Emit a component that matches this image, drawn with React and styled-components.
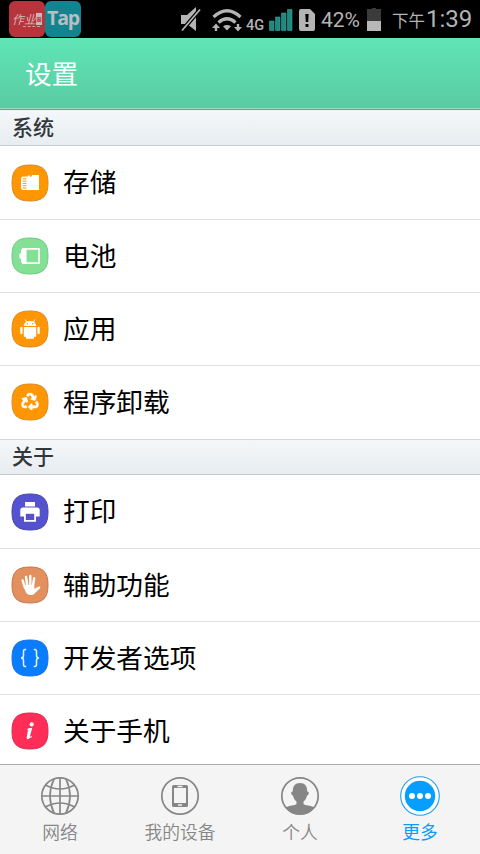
import React from "react";
import styled, { createGlobalStyle } from "styled-components";
import { FaRecycle } from "react-icons/fa";

const GlobalStyle = createGlobalStyle`
  * {
    box-sizing: border-box;
  }
  body {
    margin: 0;
    background: #fff;
    font-family: Roboto, "Noto Sans CJK SC", sans-serif;
  }
`;

const Screen = styled.div`
  width: 480px;
  height: 854px;
  display: flex;
  flex-direction: column;
  overflow: hidden;
`;

const StatusBar = styled.div`
  height: 38px;
  flex: none;
  display: flex;
  align-items: flex-start;
  background: #000;
  color: #b4b4b4;
  padding-left: 9px;
`;

const Spacer = styled.div`
  flex: none;
  width: ${(props) => props.$w}px;
`;

const StatusIcon = styled.div`
  flex: none;
  margin-top: ${(props) => props.$top}px;
`;

const AppBadge = styled.div`
  width: 36px;
  height: 36px;
  flex: none;
  margin-top: 1px;
  border-radius: 6px;
  display: flex;
  flex-direction: column;
  align-items: center;
  justify-content: center;
  background: ${(props) => props.$color};
`;

const TapText = styled.span`
  font: bold 19.5px "Open Sans", sans-serif;
  line-height: 24px;
  letter-spacing: -1.2px;
  padding-bottom: 2px;
  color: #b9bfc0;
`;

const HomeworkText = styled.span`
  display: flex;
  align-items: center;
  font: italic 12px "Noto Sans CJK SC", sans-serif;
  line-height: 14px;
  color: #cfb5b5;
`;

const Stamp = styled.span`
  display: flex;
  align-items: center;
  justify-content: center;
  font: bold 5px "Noto Sans CJK SC", sans-serif;
  height: 12px;
  width: 6px;
  background: #cfb5b5;
  color: #b8343c;
`;

const Tagline = styled.span`
  width: 17px;
  margin-left: 9px;
  border-bottom: 1px dashed #cf9a9c;
`;

const StatusText = styled.span`
  width: ${(props) => props.$w}px;
  flex: none;
  margin-top: ${(props) => props.$top}px;
  font-size: ${(props) => props.$size}px;
  font-weight: ${(props) => props.$weight || 400};
  line-height: 26px;
  white-space: nowrap;
`;

const Header = styled.header`
  height: 72px;
  flex: none;
  display: flex;
  align-items: center;
  padding: 0 25px 4px;
  background: linear-gradient(#5fe5b6, #5acba2 70px, #8fe0c2 70px, #8fe0c2 71px, #5cae90 71px);
  color: #fff;
  font-size: 26.6px;
`;

const SectionTitle = styled.h2`
  height: 36px;
  flex: none;
  margin: 0;
  padding-left: 12px;
  font-size: 21px;
  font-weight: 500;
  line-height: 34px;
  color: #33373b;
  background: linear-gradient(#f4f7f9, #e8edf1);
  border-top: 1px solid ${(props) => props.$edge};
  border-bottom: 1px solid #c9cccf;
`;

const List = styled.div`
  flex: none;
`;

const Row = styled.div`
  height: 73px;
  display: flex;
  align-items: center;
  gap: 14px;
  padding-left: 11px;
  background: #fff;
  color: #000;
  font-size: 26.7px;
  border-bottom: 1px solid #e0e0e0;

  &:first-child {
    height: 74px;
  }
  &:last-child {
    border-bottom-color: #fff;
  }
`;

const RowText = styled.span`
  line-height: 40px;
  padding-top: 1px;
`;

const Content = styled.main`
  height: 654px;
  flex: none;
  overflow: hidden;
`;

const TabBar = styled.nav`
  height: 90px;
  flex: none;
  display: grid;
  grid-template-columns: repeat(4, 1fr);
  background: #f4f4f4;
  border-top: 1px solid #acacac;
`;

const Tab = styled.div`
  display: flex;
  flex-direction: column;
  align-items: center;
  padding-top: 11px;
  color: ${(props) => (props.$active ? "#0d9bf8" : "#868686")};
  font-size: 17.8px;
  font-weight: ${(props) => (props.$active ? 400 : 350)};
`;

const TabText = styled.span`
  margin-top: 4px;
  line-height: 26px;
`;

const IconSvg = styled.svg`
  display: block;
  flex: none;
`;

const Badge = ({ color, edge, children }) => (
  <IconSvg width="38" height="38" viewBox="-19 -19 38 38" fill="#fff">
    <path
      d="M0-18C13-18 18-13 18 0S13 18 0 18-18 13-18 0-13-18 0-18Z"
      fill={color}
      stroke={edge}
    />
    {children}
  </IconSvg>
);

const StorageIcon = () => (
  <Badge color="#ff9602" edge="#d58b2c">
    <path d="M-9-5L-7.5-6.5H-2.2V-7.4H0V-6.2H1.4L2-8H9V7H-7.5L-9 5.5Z" />
    <path d="M-7.2-4.2h3.6M-7.2-1.9h3.6M-7.2 .4h3.6M-7.2 2.7h3.6M-7.2 5h3.6" stroke="#ff9602" strokeWidth="1" />
  </Badge>
);

const BatteryIcon = () => (
  <Badge color="#83e095" edge="#6acb80">
    <path
      fillRule="evenodd"
      d="M-7.5-8H9.8V8H-7.5L-9 6V3L-10.6 2V-2L-9-3V-6ZM-3.5-6.2V6.2H8.2V-6.2Z"
    />
  </Badge>
);

const AndroidIcon = () => (
  <Badge color="#ff9602" edge="#d58b2c">
    <path d="M-6.2-3C-6-6.5-3.5-8-0-8S6-6.5 6.2-3Z" />
    <path d="M-5-9.5L-3.3-7M5-9.5L3.3-7" stroke="#fff" strokeWidth="1" />
    <circle cx="-2.7" cy="-5.2" r=".7" fill="#ff9602" />
    <circle cx="2.7" cy="-5.2" r=".7" fill="#ff9602" />
    <path d="M-6.2-2H6.2V6.5Q6.2 8 4.7 8H4V9.7H-4V8H-4.7Q-6.2 8-6.2 6.5Z" />
    <path d="M-8.6-1V4M8.6-1V4" stroke="#fff" strokeWidth="2.3" strokeLinecap="round" />
  </Badge>
);

const RecycleIcon = () => (
  <Badge color="#ff9602" edge="#d58b2c">
    <FaRecycle x="-8.7" y="-9.3" size="17.4" color="#fff" stroke="#fff" strokeWidth="22" />
  </Badge>
);

const PrintIcon = () => (
  <Badge color="#5552cf" edge="#4943a8">
    <path d="M-5-10H5V-5.5H-5Z" />
    <path d="M-7-4.5H7Q9.7-4.5 9.7-2V4.5H6V9.7H-6V4.5H-9.7V-2Q-9.7-4.5-7-4.5Z" />
    <path d="M-4.2 1.8H4.2V8H-4.2Z" fill="#5552cf" />
  </Badge>
);

const HandIcon = () => (
  <Badge color="#e3905e" edge="#c3754a">
    <path
      d="M-5 3L-7.4-4.6M-2.5 2L-4-8M.3 2L.3-9M2.7 2L4.2-6.8"
      stroke="#fff"
      strokeWidth="2.4"
      strokeLinecap="round"
    />
    <path d="M-6.3 1L-3 0H4.2L4.5 4C6 3 7.5 2.2 9 1.6 10.6 1.4 10.8 2.6 9.8 3.4L5.4 7.8C3.9 9.7 2 10.4 0 10-2.7 9.6-4.2 8-4.8 5.5Z" />
  </Badge>
);

const BracesIcon = () => (
  <Badge color="#0a7cff" edge="#176ee0">
    <path
      d="M-3.8-8.5H-4.8Q-6.5-8.5-6.5-6.5V-2.5Q-6.5 0-9 0-6.5 0-6.5 2.5V6.5Q-6.5 8.5-4.8 8.5H-3.8M3.8-8.5H4.8Q6.5-8.5 6.5-6.5V-2.5Q6.5 0 9 0 6.5 0 6.5 2.5V6.5Q6.5 8.5 4.8 8.5H3.8"
      fill="none"
      stroke="#e5f2ff"
      strokeWidth="1.5"
    />
  </Badge>
);

const InfoIcon = () => (
  <Badge color="#ff2d58" edge="#d8294d">
    <circle cx="1.7" cy="-6.6" r="2.1" />
    <path
      d="M-2.6-1.2Q-.6-2.6 .8-2.2L-1.4 5.6Q-1.5 7.4 1.8 5.4"
      fill="none"
      stroke="#fff"
      strokeWidth="1.2"
    />
    <path d="M-1.6-2.3L2.3-3.2-.3 6.2Q-.6 8.2-2 8.2-3.9 8-3.2 5.4Z" />
  </Badge>
);

const MuteIcon = () => (
  <IconSvg width="21" height="26" viewBox="0 0 21 26" fill="#b4b4b4">
    <path d="M0 8H6L15 0V24L6 17H0Z" />
    <path d="M1 23.5L19 2.5" stroke="#000" strokeWidth="4.2" />
    <path d="M1 23.5L19 2.5" stroke="#b4b4b4" strokeWidth="1.8" />
  </IconSvg>
);

const WifiIcon = () => (
  <IconSvg width="30" height="24" viewBox="0 0 30 24" fill="none" stroke="#b4b4b4">
    <path d="M1.5 8Q15-4.5 28.5 8" strokeWidth="3.2" />
    <path d="M6.5 13.5Q15 6 23.5 13.5" strokeWidth="3.2" />
    <path d="M11 17.3Q15 14.8 19 17.3L15 21.5Z" fill="#b4b4b4" stroke="none" />
    <path d="M4 14.5L8 19H5.2V22H2.8V19H0ZM26 22.5L30 18H27.2V15H24.8V18H22Z" fill="#b4b4b4" stroke="none" />
  </IconSvg>
);

const SignalIcon = () => (
  <IconSvg width="24" height="22" viewBox="0 0 24 22" fill="#1d8a82" stroke="#3f9f97" strokeWidth=".6">
    <path d="M.5 12H5V21.5H.5ZM6.5 8H11V21.5H6.5ZM12.5 4H17V21.5H12.5ZM18.5.5H23V21.5H18.5Z" />
  </IconSvg>
);

const SimIcon = () => (
  <IconSvg width="16" height="22" viewBox="0 0 16 22" fill="#b4b4b4">
    <path d="M2 0H11L16 5V20Q16 22 14 22H2Q0 22 0 20V2Q0 0 2 0Z" />
    <path d="M6.3 5H9.7L9.2 13H6.8ZM6.5 15H9.5V18H6.5Z" fill="#000" />
  </IconSvg>
);

const BatteryStatusIcon = () => (
  <IconSvg width="14" height="23" viewBox="0 0 14 23">
    <path d="M0 1H5V0H9V1H14V13H0Z" fill="#3b3b3b" />
    <path d="M0 13H14V23H0Z" fill="#b8b8b8" />
  </IconSvg>
);

const GlobeIcon = () => (
  <IconSvg width="40" height="40" viewBox="-20 -20 40 40" fill="none" stroke="#868686" strokeWidth="1.7">
    <circle r="18.2" />
    <path d="M0-18V18M-18 0H18" />
    <path d="M-6-17Q-14 0-6 17M6-17Q14 0 6 17" />
    <path d="M-14.5-11Q0-3 14.5-11M-14.5 11Q0 3 14.5 11" />
  </IconSvg>
);

const DeviceIcon = () => (
  <IconSvg width="40" height="40" viewBox="-20 -20 40 40" fill="none" stroke="#868686">
    <circle r="18.2" strokeWidth="1.7" />
    <rect x="-8" y="-11" width="16" height="22" rx="1.5" fill="#868686" stroke="none" />
    <path d="M-6-8H6V7H-6Z" fill="#f4f4f4" stroke="none" />
    <path d="M-2.5-9.5H2.5M-2 9H2" stroke="#f4f4f4" strokeWidth="1.3" />
  </IconSvg>
);

const PersonIcon = () => (
  <IconSvg width="40" height="40" viewBox="-20 -20 40 40" fill="#868686">
    <circle r="18.2" fill="none" stroke="#868686" strokeWidth="1.7" />
    <path d="M0-13C5-13 7.3-10 7.2-4.5 9.5-4.8 9.2-1 7-.5 6.5 2.5 5 4.5 3.5 5.5V8C5 10 10.5 9 14.5 11.5 11 16 6 18.5 0 18.5S-11 16-14.5 11.5C-10.5 9-5 10-3.5 8V5.5C-5 4.5-6.5 2.5-7-.5-9.2-1-9.5-4.8-7.2-4.5-7.3-10-5-13 0-13Z" />
  </IconSvg>
);

const MoreIcon = () => (
  <IconSvg width="40" height="40" viewBox="-20 -20 40 40" fill="#fff">
    <circle r="19.3" stroke="#1a9ef5" strokeWidth="1.1" />
    <circle r="15.2" fill="#069fff" />
    <circle cx="-8" r="3" />
    <circle r="3" />
    <circle cx="8" r="3" />
  </IconSvg>
);

const systemItems = [
  { label: "存储", Icon: StorageIcon },
  { label: "电池", Icon: BatteryIcon },
  { label: "应用", Icon: AndroidIcon },
  { label: "程序卸载", Icon: RecycleIcon },
];

const aboutItems = [
  { label: "打印", Icon: PrintIcon },
  { label: "辅助功能", Icon: HandIcon },
  { label: "开发者选项", Icon: BracesIcon },
  { label: "关于手机", Icon: InfoIcon },
];

const tabs = [
  { label: "网络", Icon: GlobeIcon },
  { label: "我的设备", Icon: DeviceIcon },
  { label: "个人", Icon: PersonIcon },
  { label: "更多", Icon: MoreIcon, active: true },
];

const Rows = ({ items }) => (
  <List>
    {items.map(({ label, Icon }) => (
      <Row key={label}>
        <Icon />
        <RowText>{label}</RowText>
      </Row>
    ))}
  </List>
);

const App = () => {
  return (
    <>
      <GlobalStyle />
      <Screen>
        <StatusBar>
          <AppBadge $color="#b8343c">
            <HomeworkText>
              作业<Stamp>圈</Stamp>
            </HomeworkText>
            <Tagline />
          </AppBadge>
          <AppBadge $color="#12838f">
            <TapText>Tap</TapText>
          </AppBadge>
          <Spacer $w={100} />
          <StatusIcon $top={7}>
            <MuteIcon />
          </StatusIcon>
          <Spacer $w={10} />
          <StatusIcon $top={9}>
            <WifiIcon />
          </StatusIcon>
          <Spacer $w={4} />
          <StatusText $w={19} $top={13} $size={14.5} $weight={500}>
            4G
          </StatusText>
          <Spacer $w={4} />
          <StatusIcon $top={9}>
            <SignalIcon />
          </StatusIcon>
          <Spacer $w={6} />
          <StatusIcon $top={9}>
            <SimIcon />
          </StatusIcon>
          <Spacer $w={6} />
          <StatusText $w={40} $top={7} $size={21}>
            42%
          </StatusText>
          <Spacer $w={6} />
          <StatusIcon $top={8}>
            <BatteryStatusIcon />
          </StatusIcon>
          <Spacer $w={11} />
          <StatusText $w={34} $top={9} $size={16.5}>
            下午
          </StatusText>
          <StatusText $w={48} $top={6} $size={24}>
            1:39
          </StatusText>
        </StatusBar>
        <Header>设置</Header>
        <Content>
          <SectionTitle $edge="#eef6f4">系统</SectionTitle>
          <Rows items={systemItems} />
          <SectionTitle $edge="#d5d8da">关于</SectionTitle>
          <Rows items={aboutItems} />
        </Content>
        <TabBar>
          {tabs.map(({ label, Icon, active }) => (
            <Tab key={label} $active={active}>
              <Icon />
              <TabText>{label}</TabText>
            </Tab>
          ))}
        </TabBar>
      </Screen>
    </>
  );
};

export default App;
